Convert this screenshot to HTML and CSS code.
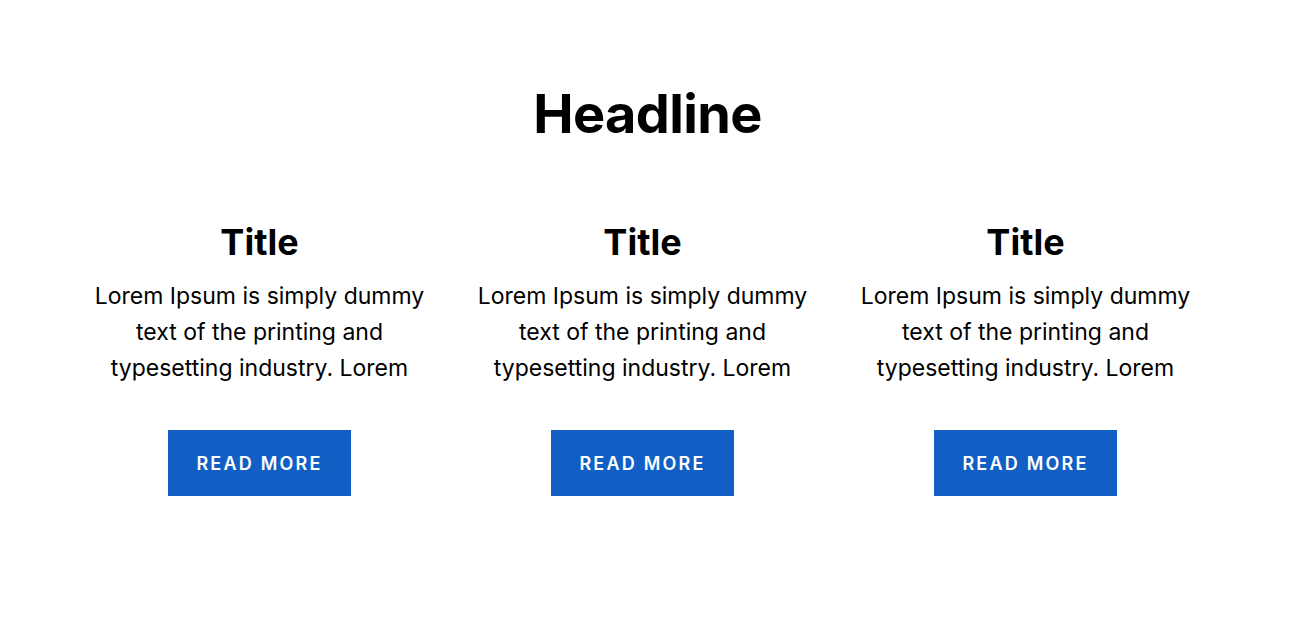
FILE: index.html
```html
<!DOCTYPE html>
<html lang="en">
<head>
<meta charset="utf-8">
<title>Headline</title>
<link rel="stylesheet" href="styles.css">
</head>
<body>
<section class="section">
  <h1 class="headline">Headline</h1>
  <div class="cards">
    <article class="card">
      <h2 class="card-title">Title</h2>
      <p class="card-text">Lorem Ipsum is simply dummy text of the printing and typesetting industry. Lorem</p>
      <a class="btn" href="#">READ MORE</a>
    </article>
    <article class="card">
      <h2 class="card-title">Title</h2>
      <p class="card-text">Lorem Ipsum is simply dummy text of the printing and typesetting industry. Lorem</p>
      <a class="btn" href="#">READ MORE</a>
    </article>
    <article class="card">
      <h2 class="card-title">Title</h2>
      <p class="card-text">Lorem Ipsum is simply dummy text of the printing and typesetting industry. Lorem</p>
      <a class="btn" href="#">READ MORE</a>
    </article>
  </div>
</section>
</body>
</html>
```
FILE: styles.css
```css
* { box-sizing: border-box; }
html, body { margin: 0; padding: 0; background: #fff; }
body {
  font-family: Inter, "Noto Sans", sans-serif;
  color: #000;
}
.section {
  padding: 80px 0 0 68px;
  display: flex;
  flex-direction: column;
  align-items: flex-start;
}
.headline {
  width: 1149px;
  margin: 0;
  text-align: center;
  font-size: 54px;
  line-height: 68px;
  font-weight: 700;
  letter-spacing: -0.6px;
  padding-left: 10px;
}
.cards {
  display: grid;
  grid-template-columns: repeat(3, 383px);
  margin-top: 72px;
}
.card {
  display: flex;
  flex-direction: column;
  align-items: center;
  text-align: center;
}
.card-title {
  margin: 0;
  font-size: 36px;
  line-height: 44px;
  font-weight: 700;
}
.card-text {
  margin: 14px 0 0;
  width: 350px;
  font-size: 23px;
  line-height: 36px;
  font-weight: 400;
}
.btn {
  margin-top: 44px;
  width: 183px;
  height: 66px;
  display: flex;
  align-items: center;
  justify-content: center;
  background: #115fc5;
  color: #fff;
  text-decoration: none;
  font-size: 18px;
  font-weight: 600;
  letter-spacing: 2.2px;
}
```
